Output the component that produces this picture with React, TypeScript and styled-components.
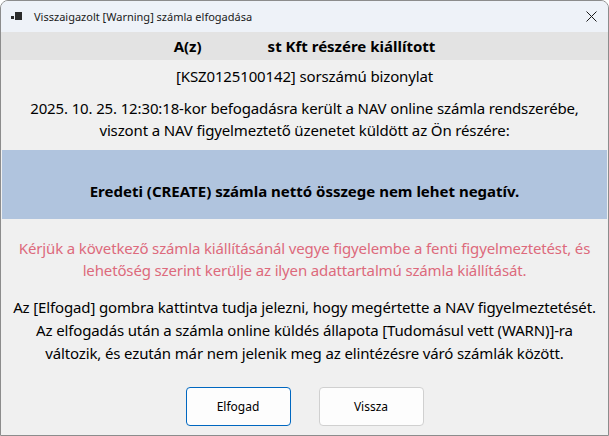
import React from "react";
import styled, { createGlobalStyle } from "styled-components";

const Global = createGlobalStyle`
  html, body { margin: 0; padding: 0; background: #ffffff; }
  body { font-family: "Noto Sans", "Segoe UI", sans-serif; }
  * { box-sizing: border-box; }
`;

const Window = styled.div`
  width: 609px;
  height: 436px;
  display: flex;
  flex-direction: column;
  border: 1px solid #8c8c8c;
  border-radius: 8px 8px 0 0;
  overflow: hidden;
  background: #f0f0f0;
`;

const TitleBar = styled.div`
  height: 31px;
  flex: none;
  display: flex;
  align-items: center;
  background: #eef2f8;
  padding-left: 10px;
  padding-right: 10px;
  gap: 11px;
`;

const TitleText = styled.span`
  flex: 1;
  font-family: "Noto Sans", sans-serif;
  font-size: 11px;
  color: #1a1a1a;
`;

const Content = styled.div`
  flex: 1;
  display: flex;
  flex-direction: column;
  align-items: stretch;
  text-align: center;
  color: #000;
`;

const HeaderBand = styled.div`
  height: 28px;
  background: #e3e3e3;
  display: flex;
  align-items: center;
  justify-content: center;
  font-weight: 700;
  font-size: 15px;
`;

const Redacted = styled.span`
  display: inline-block;
  width: 66px;
`;

const Para = styled.p<{ $top: number; $lh?: number; $color?: string }>`
  margin: ${(p) => p.$top}px 0 0 0;
  font-size: 15px;
  line-height: ${(p) => p.$lh ?? 22}px;
  color: ${(p) => p.$color ?? "#000"};
  letter-spacing: -0.14px;
`;

const WarningBand = styled.div`
  margin: 9px 1px 0 1px;
  height: 69px;
  background: #b0c4de;
  padding-top: 30px;
  font-weight: 700;
  font-size: 15px;
  line-height: 22px;
`;

const ButtonRow = styled.div`
  margin-top: 22px;
  display: flex;
  justify-content: center;
  gap: 28px;
`;

const Button = styled.button<{ $primary?: boolean }>`
  width: 105px;
  height: 39px;
  border-radius: 4px;
  background: #fdfdfd;
  border: 1px solid ${(p) => (p.$primary ? "#0067c0" : "#d0d0d0")};
  font-family: "Noto Sans", sans-serif;
  font-size: 12px;
  color: #000;
  padding: 0;
`;

const AppIcon = () => (
  <svg width="12" height="10" viewBox="0 0 12 10" style={{ flex: "none" }}>
    <rect x="0" y="4" width="3" height="3" fill="#2b2b2b" />
    <rect x="4" y="0" width="7" height="8" fill="#2b2b2b" />
  </svg>
);

const CloseIcon = () => (
  <svg width="11" height="11" viewBox="0 0 11 11" style={{ flex: "none", marginRight: "1px" }}>
    <path d="M0.5 0.5 L10.5 10.5 M10.5 0.5 L0.5 10.5" stroke="#1a1a1a" strokeWidth="1" />
  </svg>
);

export default function App() {
  return (
    <>
      <Global />
      <Window>
        <TitleBar>
          <AppIcon />
          <TitleText>Visszaigazolt [Warning] számla elfogadása</TitleText>
          <CloseIcon />
        </TitleBar>
        <Content>
          <HeaderBand>
            A(z)
            <Redacted />
            st Kft részére kiállított
          </HeaderBand>
          <Para $top={5}>[KSZ0125100142] sorszámú bizonylat</Para>
          <Para $top={10}>
            2025. 10. 25. 12:30:18-kor befogadásra került a NAV online számla rendszerébe,
            <br />
            viszont a NAV figyelmeztető üzenetet küldött az Ön részére:
          </Para>
          <WarningBand>Eredeti (CREATE) számla nettó összege nem lehet negatív.</WarningBand>
          <Para $top={18} $color="#dd6a7c">
            Kérjük a következő számla kiállításánál vegye figyelembe a fenti figyelmeztetést, és
            <br />
            lehetőség szerint kerülje az ilyen adattartalmú számla kiállítását.
          </Para>
          <Para $top={15} $lh={23}>
            Az [Elfogad] gombra kattintva tudja jelezni, hogy megértette a NAV figyelmeztetését.
            <br />
            Az elfogadás után a számla online küldés állapota [Tudomásul vett (WARN)]-ra
            <br />
            változik, és ezután már nem jelenik meg az elintézésre váró számlák között.
          </Para>
          <ButtonRow>
            <Button $primary>Elfogad</Button>
            <Button>Vissza</Button>
          </ButtonRow>
        </Content>
      </Window>
    </>
  );
}
